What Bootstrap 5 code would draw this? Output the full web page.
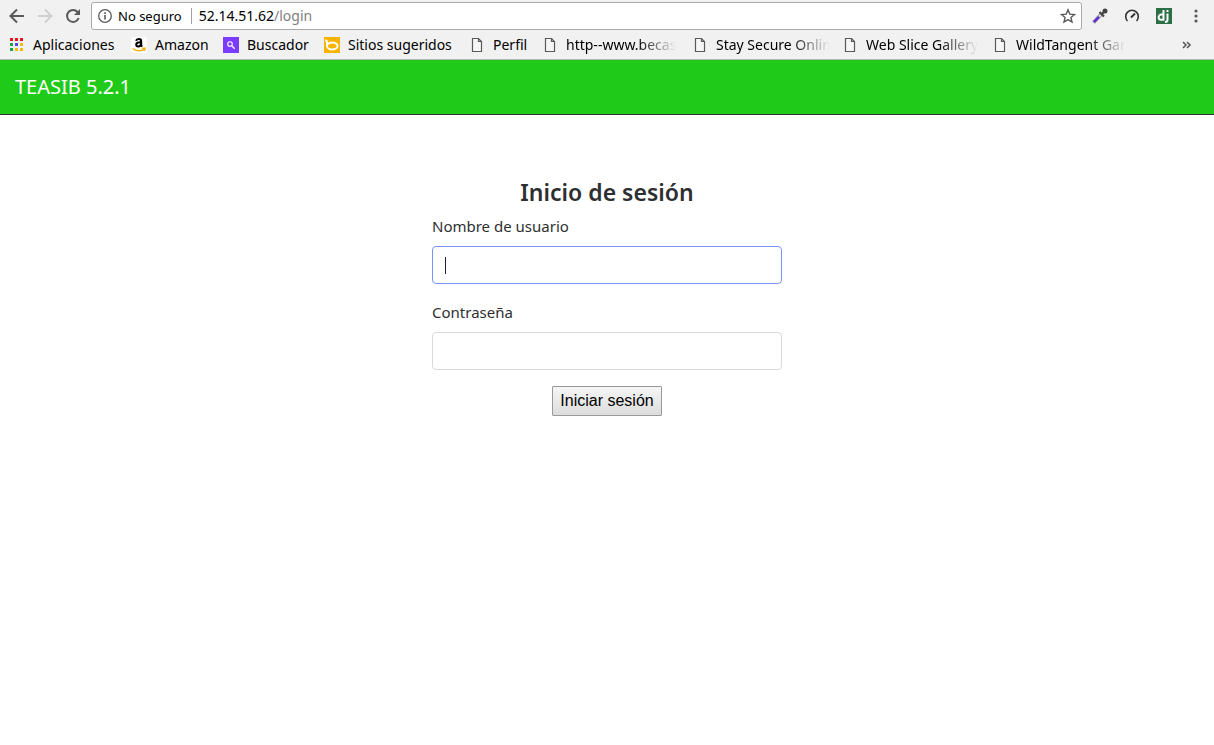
<!DOCTYPE html>
<html lang="es">
<head>
<meta charset="utf-8">
<meta name="viewport" content="width=device-width, initial-scale=1">
<title>Inicio de sesión</title>
<link href="https://cdn.jsdelivr.net/npm/bootstrap@5.3.0/dist/css/bootstrap.min.css" rel="stylesheet">
<style>
  body { font-family: "Noto Sans", "Open Sans", sans-serif; color: #2e2f30; background: #fff; }
  svg { display: block; flex: none; }
  .browser { background: #f1f1f1; border-bottom: 1px solid #b6b4b6; color: #000; font-size: 14px; line-height: 20px; }
  .toolbar { height: 32px; padding: 2px 10px 2px 9px; }
  .nav-buttons { gap: 12px; }
  .tool { border: 0; padding: 0; background: none; }
  .omnibox { height: 28px; margin-left: 10px; padding: 0 5px; background: #fff; border: 1px solid #a9a9a9; border-radius: 3px; }
  .security { font-size: 13px; margin-left: 5px; padding-right: 9px; margin-right: 7px; border-right: 1px solid #a0a0a0; line-height: 16px; }
  .address { font-size: 14px; line-height: 20px; color: #000; }
  .address span { color: #808080; }
  .extensions { gap: 16px; padding-left: 10px; }
  .bookmarks { display: grid; grid-template-columns: 122px 92px 101px 145px 73px repeat(4, 150px) 1fr; padding: 0 21px 2px 9px; height: 27px; }
  .bookmarks a { color: #000; min-width: 0; padding-right: 12px; }
  .faded { overflow: hidden; -webkit-mask-image: linear-gradient(to right, #000 65%, transparent); mask-image: linear-gradient(to right, #000 65%, transparent); }
  .site-nav { background: #1fcb18; border-bottom: 1px solid #2e2f30; padding: 8px 15px; }
  .site-nav .navbar-brand { color: #fff; font-size: 20px; line-height: 28px; }
  .login { max-width: 350px; margin-top: 63px; }
  .login h1 { font-size: 23px; line-height: 28px; font-weight: 600; margin-bottom: 8px; }
  .login label { line-height: 24px; font-size: 15px; }
  .login .form-control { height: 38px; border-color: #d9d9d9; border-radius: 4px; box-shadow: none; }
  .login .form-control.active-field { border-color: #7b93ff; caret-color: transparent; }
  .text-caret { position: absolute; left: 13px; top: 11px; width: 1px; height: 17px; background: #222; }
  .submit { font: 16px/20px "Liberation Sans", Arial, sans-serif; color: #000; height: 30px; padding: 0 7px; border: 1px solid #999; border-radius: 1px; background: linear-gradient(#f6f6f6, #dcdcdc); }
</style>
</head>
<body>
<svg width="0" height="0" class="position-absolute" aria-hidden="true">
  <symbol id="page" viewBox="0 0 16 16"><path d="M3.500 1.500h6l3 3v10h-9zM9.500 1.500v3h3" fill="#fff" fill-opacity=".4" stroke="#5a5a5a" stroke-width="1.200"/></symbol>
</svg>
<header class="browser">
  <div class="toolbar d-flex align-items-center">
    <div class="nav-buttons d-flex">
      <button class="tool" aria-label="Atrás"><svg width="16" height="16" viewBox="0 0 16 16" fill="none" stroke="#5a5a5a" stroke-width="2"><path d="M15 8H2M8 1.500L1.500 8 8 14.500"/></svg></button>
      <button class="tool" aria-label="Adelante"><svg width="16" height="16" viewBox="0 0 16 16" fill="none" stroke="#d0d0d0" stroke-width="2"><path d="M1 8h13M8 1.500L14.500 8 8 14.500"/></svg></button>
      <button class="tool" aria-label="Recargar"><svg width="16" height="16" viewBox="0 0 16 16"><path d="M13 4.500A6 6 0 1 0 13.700 10" fill="none" stroke="#5a5a5a" stroke-width="2"/><path d="M15 1v6H9z" fill="#5a5a5a"/></svg></button>
    </div>
    <div class="omnibox d-flex align-items-center flex-grow-1">
      <svg width="16" height="16" viewBox="0 0 16 16" fill="none" stroke="#5a5a5a" stroke-width="1.300"><circle cx="8" cy="8" r="6.300"/><path d="M8 7v4.500M8 4.300v1.600" stroke-width="1.600"/></svg>
      <span class="security">No seguro</span>
      <div class="address flex-grow-1">52.14.51.62<span>/login</span></div>
      <button class="tool" aria-label="Añadir a marcadores"><svg width="16" height="16" viewBox="0 0 16 16"><path d="M8 1.800l1.800 4.300 4.700.4-3.600 3 1.100 4.600L8 11.600l-4 2.500 1.100-4.600-3.600-3 4.700-.4z" fill="none" stroke="#5a5a5a" stroke-width="1.400"/></svg></button>
    </div>
    <div class="extensions d-flex">
      <button class="tool" aria-label="Cuentagotas"><svg width="16" height="16" viewBox="0 0 16 16"><path d="M1.500 14.500L9 6.500" stroke="#888" stroke-width="3.600"/><path d="M2 14L9 6.500" stroke="#ddd" stroke-width="2"/><path d="M2 14l5-5.300" stroke="#5b20e8" stroke-width="2.200"/><path d="M7.500 4l4.500 4.500M9.500 6.500l3-3" stroke="#444" stroke-width="2.200"/><circle cx="13" cy="3" r="2.500" fill="#444"/></svg></button>
      <button class="tool" aria-label="Velocidad"><svg width="16" height="16" viewBox="0 0 16 16" fill="none" stroke="#333" stroke-width="1.600"><path d="M3.500 13A6.300 6.300 0 1 1 12.500 13"/><path d="M7 9.500L11 5.500" stroke-width="2"/></svg></button>
      <button class="tool" aria-label="Django"><svg width="16" height="16" viewBox="0 0 16 16"><path d="M0 0h16v16H0z" fill="#2b6f44"/><path d="M7.500 2v9.800H5.200a2.600 2.600 0 0 1 0-5.200h2.300M11.500 5.500v6.200q0 2.300-2.500 2.300M11.500 2v2" fill="none" stroke="#fff" stroke-width="2"/></svg></button>
      <button class="tool" aria-label="Menú"><svg width="16" height="16" viewBox="0 0 16 16" fill="#5a5a5a"><circle cx="8" cy="3" r="1.600"/><circle cx="8" cy="8" r="1.600"/><circle cx="8" cy="13" r="1.600"/></svg></button>
    </div>
  </div>
  <nav class="bookmarks align-items-center" aria-label="Marcadores">
    <a href="#" class="d-flex align-items-center gap-2 text-decoration-none text-nowrap"><svg width="16" height="16" viewBox="0 0 16 16"><path d="M1 1h3v3H1zM6 1h3v3H6zM11 1h3v3h-3z" fill="#e8141c"/><path d="M1 6h3v3H1z" fill="#13a84d"/><path d="M6 6h3v3H6z" fill="#5545ee"/><path d="M11 6h3v3h-3zM6 11h3v3H6zM11 11h3v3h-3z" fill="#efb910"/><path d="M1 11h3v3H1z" fill="#13a84d"/></svg><span>Aplicaciones</span></a>
    <a href="#" class="d-flex align-items-center gap-2 text-decoration-none text-nowrap"><svg width="16" height="16" viewBox="0 0 16 16"><rect width="16" height="16" rx="2" fill="#fff"/><path d="M5 3.800Q5.500 2 7.800 2q2.400 0 2.400 2.200v4.200l1 1.200M10 5.300Q5.200 5 5.200 7.600q0 1.900 2 1.900 2.300 0 2.900-2.500" fill="none" stroke="#000" stroke-width="2"/><path d="M1.500 11.500q5.500 4 11.500.8M11 11.200h3.200l-.8 2.800" fill="none" stroke="#f3b314" stroke-width="1.500"/></svg><span>Amazon</span></a>
    <a href="#" class="d-flex align-items-center gap-2 text-decoration-none text-nowrap"><svg width="16" height="16" viewBox="0 0 16 16"><path d="M0 0h16v16H0z" fill="#7a3cff"/><circle cx="7" cy="7" r="2.300" fill="none" stroke="#fff" stroke-width="1.100"/><path d="M9 9l2.700 2.700" stroke="#fff" stroke-width="1.300"/></svg><span>Buscador</span></a>
    <a href="#" class="d-flex align-items-center gap-2 text-decoration-none text-nowrap"><svg width="16" height="16" viewBox="0 0 16 16"><path d="M0 0h16v16H0z" fill="#fab400"/><path d="M1 3.500h1Q3 3.500 3 5v4" fill="none" stroke="#fff" stroke-width="2"/><ellipse cx="8.300" cy="9" rx="5.300" ry="3.500" fill="none" stroke="#fff" stroke-width="2"/></svg><span>Sitios sugeridos</span></a>
    <a href="#" class="d-flex align-items-center gap-2 text-decoration-none text-nowrap"><svg width="16" height="16"><use href="#page"/></svg><span>Perfil</span></a>
    <a href="#" class="d-flex align-items-center gap-2 text-decoration-none text-nowrap"><svg width="16" height="16"><use href="#page"/></svg><span class="faded">http--www.becas</span></a>
    <a href="#" class="d-flex align-items-center gap-2 text-decoration-none text-nowrap"><svg width="16" height="16"><use href="#page"/></svg><span class="faded">Stay Secure Onlin</span></a>
    <a href="#" class="d-flex align-items-center gap-2 text-decoration-none text-nowrap"><svg width="16" height="16"><use href="#page"/></svg><span class="faded">Web Slice Gallery</span></a>
    <a href="#" class="d-flex align-items-center gap-2 text-decoration-none text-nowrap"><svg width="16" height="16"><use href="#page"/></svg><span class="faded">WildTangent Gar</span></a>
    <button class="tool ms-auto" aria-label="Más marcadores"><svg width="12" height="12" viewBox="0 0 12 12" fill="none" stroke="#5a5a5a" stroke-width="1.600"><path d="M2 3l3 3-3 3M6 3l3 3-3 3"/></svg></button>
  </nav>
</header>
<nav class="navbar site-nav"><a class="navbar-brand" href="#">TEASIB 5.2.1</a></nav>
<main class="container">
  <form class="login mx-auto">
    <h1 class="text-center">Inicio de sesión</h1>
    <div class="mb-3">
      <label for="user" class="mb-2">Nombre de usuario</label>
      <div class="position-relative">
        <input id="user" type="text" class="form-control active-field">
        <span class="text-caret"></span>
      </div>
    </div>
    <div class="mb-3">
      <label for="pass" class="mb-2">Contraseña</label>
      <input id="pass" type="password" class="form-control">
    </div>
    <div class="text-center"><button type="button" class="submit">Iniciar sesión</button></div>
  </form>
</main>
<script src="https://cdn.jsdelivr.net/npm/bootstrap@5.3.0/dist/js/bootstrap.bundle.min.js"></script>
</body>
</html>
